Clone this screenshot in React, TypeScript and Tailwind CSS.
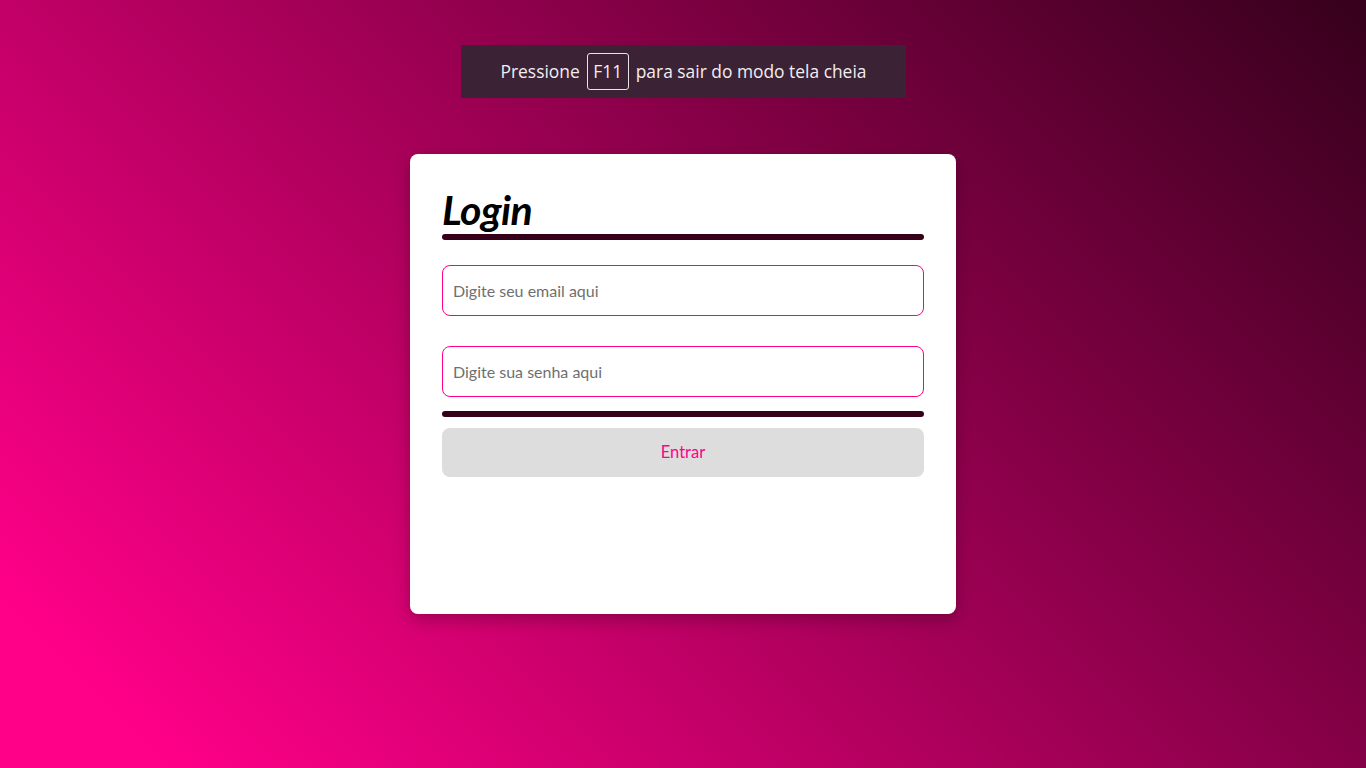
import React from "react";

export default function App() {
  return (
    <div
      className="relative w-full h-[768px] overflow-hidden bg-[linear-gradient(45deg,#ff0088_8%,#36001c_100%)]"
      style={{ fontFamily: "Lato, 'Open Sans', sans-serif" }}
    >
      <div className="absolute left-[461px] top-[45px] w-[445px] h-[53px] bg-[#3b2335] flex items-center justify-center text-[17.4px] text-[#f2eef0] gap-[7px]" style={{ fontFamily: "'Open Sans', 'DejaVu Sans', sans-serif" }}>
        <span>Pressione</span>
        <span className="border border-[#e8e4e6] rounded-[3px] h-[37px] w-[42px] flex items-center justify-center">F11</span>
        <span>para sair do modo tela cheia</span>
      </div>

      <div className="flex justify-center pt-[154px]">
        <div className="w-[546px] h-[460px] bg-white rounded-[8px] shadow-[0_6px_16px_rgba(0,0,0,0.25)] px-[32px] pt-[32px] flex flex-col">
          <h1 className="text-[41px] leading-[48px] font-bold italic text-black tracking-[-0.5px]">Login</h1>
          <div className="h-[6px] rounded-full bg-[#36001a] mt-[0px]" />
          <input
            className="mt-[25px] h-[51px] rounded-[8px] border border-[#ff0088] px-[10px] text-[16px] text-[#333] placeholder:text-[#6f6f6f] outline-none"
            placeholder="Digite seu email aqui"
          />
          <input
            type="password"
            className="mt-[30px] h-[51px] rounded-[8px] border border-[#ff0088] px-[10px] text-[16px] text-[#333] placeholder:text-[#6f6f6f] outline-none"
            placeholder="Digite sua senha aqui"
          />
          <div className="h-[6px] rounded-full bg-[#36001a] mt-[14px]" />
          <button className="mt-[11px] h-[49px] rounded-[8px] bg-[#dddddd] text-[#ff0088] text-[16.5px]">Entrar</button>
        </div>
      </div>
    </div>
  );
}
